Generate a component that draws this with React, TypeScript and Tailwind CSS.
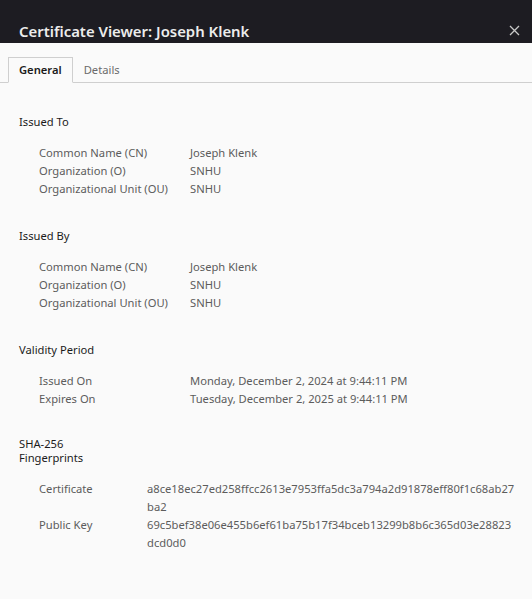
const font = { fontFamily: '"Segoe UI", "Noto Sans", "Liberation Sans", sans-serif' };

type Row = { label: string; value: string[] };

const sections: { title: string[]; labelW: string; extra: string; rows: Row[] }[] = [
  {
    title: ['Issued To'],
    labelW: 'w-[151px]',
    extra: '',
    rows: [
      { label: 'Common Name (CN)', value: ['Joseph Klenk'] },
      { label: 'Organization (O)', value: ['SNHU'] },
      { label: 'Organizational Unit (OU)', value: ['SNHU'] },
    ],
  },
  {
    title: ['Issued By'],
    labelW: 'w-[151px]',
    extra: '',
    rows: [
      { label: 'Common Name (CN)', value: ['Joseph Klenk'] },
      { label: 'Organization (O)', value: ['SNHU'] },
      { label: 'Organizational Unit (OU)', value: ['SNHU'] },
    ],
  },
  {
    title: ['Validity Period'],
    labelW: 'w-[151px]',
    extra: '',
    rows: [
      { label: 'Issued On', value: ['Monday, December 2, 2024 at 9:44:11 PM'] },
      { label: 'Expires On', value: ['Tuesday, December 2, 2025 at 9:44:11 PM'] },
    ],
  },
  {
    title: ['SHA-256', 'Fingerprints'],
    labelW: 'w-[108px]',
    extra: '-mt-[2px]',
    rows: [
      { label: 'Certificate', value: ['a8ce18ec27ed258ffcc2613e7953ffa5dc3a794a2d91878eff80f1c68ab27', 'ba2'] },
      { label: 'Public Key', value: ['69c5bef38e06e455b6ef61ba75b17f34bceb13299b8b6c365d03e28823', 'dcd0d0'] },
    ],
  },
];

export default function App() {
  return (
    <div className="w-[532px] h-[599px] bg-[#fafafa] overflow-hidden text-[11.2px]" style={font}>
      <div className="h-[43px] bg-[#1d1c22] flex items-end justify-between pl-[19px] pr-[12px] pb-[1px]">
        <div className="text-[14.9px] font-semibold text-[#ececec] leading-[22px]">Certificate Viewer: Joseph Klenk</div>
        <svg width="11" height="11" viewBox="0 0 11 11" className="mb-[6px]">
          <path d="M1 1L10 10M10 1L1 10" stroke="#c8c8c8" strokeWidth="1.3" />
        </svg>
      </div>

      <div className="flex items-end h-[40px] pl-[8px] border-b border-[#cfcfcf]">
        <div className="h-[26px] -mb-px px-[10px] pt-[1px] border border-[#cfcfcf] border-b-[#fafafa] bg-[#fafafa] flex items-center text-[#1b1b1b] font-semibold">
          General
        </div>
        <div className="h-[25px] px-[11px] pt-[1px] flex items-center text-[#6b6b6b]">Details</div>
      </div>

      <div className="pl-[19px] pt-[32px] flex flex-col gap-[31px]">
        {sections.map((s, i) => (
          <div key={i} className={s.extra}>
            <div className="leading-[14px] text-[#1b1b1b]">
              {s.title.map((t, j) => (
                <div key={j}>{t}</div>
              ))}
            </div>
            <div className="mt-[15px] pl-[20px]">
              {s.rows.map((r, j) => (
                <div key={j} className="flex leading-[18px] text-[#5c5c5c]">
                  <div className={`${s.labelW} shrink-0`}>{r.label}</div>
                  <div className="whitespace-nowrap">
                    {r.value.map((v, k) => (
                      <div key={k}>{v}</div>
                    ))}
                  </div>
                </div>
              ))}
            </div>
          </div>
        ))}
      </div>
    </div>
  );
}
